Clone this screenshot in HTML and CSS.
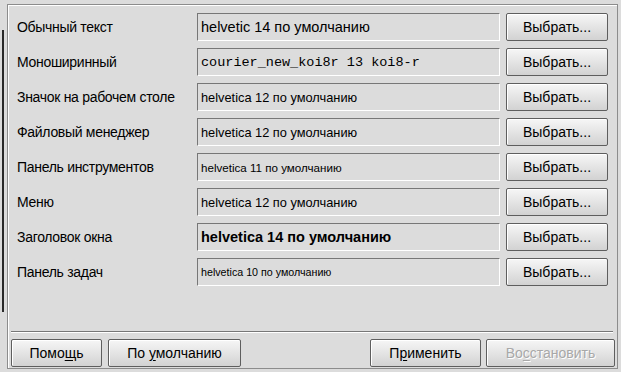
FILE: index.html
```html
<!DOCTYPE html>
<html lang="ru">
<head>
    <meta charset="UTF-8">
    <title>Шрифты</title>
    <link rel="stylesheet" href="styles.css">
</head>
<body>

    <div class="frame">
        <div class="fonts">
            <span class="label">Обычный текст</span>
            <div class="field f-normal">helvetic 14 по умолчанию</div>
            <button class="btn">Выбрать...</button>

            <span class="label">Моноширинный</span>
            <div class="field f-mono">courier_new_koi8r 13 koi8-r</div>
            <button class="btn">Выбрать...</button>

            <span class="label">Значок на рабочем столе</span>
            <div class="field f-12">helvetica 12 по умолчанию</div>
            <button class="btn">Выбрать...</button>

            <span class="label">Файловый менеджер</span>
            <div class="field f-12">helvetica 12 по умолчанию</div>
            <button class="btn">Выбрать...</button>

            <span class="label">Панель инструментов</span>
            <div class="field f-11">helvetica 11 по умолчанию</div>
            <button class="btn">Выбрать...</button>

            <span class="label">Меню</span>
            <div class="field f-12">helvetica 12 по умолчанию</div>
            <button class="btn">Выбрать...</button>

            <span class="label">Заголовок окна</span>
            <div class="field f-bold">helvetica 14 по умолчанию</div>
            <button class="btn">Выбрать...</button>

            <span class="label">Панель задач</span>
            <div class="field f-10">helvetica 10 по умолчанию</div>
            <button class="btn">Выбрать...</button>
        </div>

        <div class="separator"></div>

        <div class="actions">
            <button class="btn btn-help">Помо<u>щ</u>ь</button>
            <button class="btn btn-default">По <u>у</u>молчанию</button>
            <span class="spacer"></span>
            <button class="btn btn-apply">П<u>р</u>именить</button>
            <button class="btn btn-reset" disabled>Во<u>с</u>становить</button>
        </div>
    </div>

</body>
</html>
```

FILE: styles.css
```css
body {
    margin: 0;
    width: 621px;
    height: 372px;
    overflow: hidden;
    font-family: 'Liberation Sans', Arial, sans-serif;
    color: #000;
    /* dark edge of the window behind, on the far left */
    background: linear-gradient(#2a2a2a, #2a2a2a) no-repeat 2px 30px / 2px 282px, #dcdcdc;
}

.frame {
    box-sizing: border-box;
    width: 611px;
    height: 365px;
    margin: 4px 0 0 7px;
    border: 1px solid #8c8c8c;
    box-shadow: inset 1px 1px 0 #fff;
}

.fonts {
    display: grid;
    grid-template-columns: 174px 303px 102px;
    grid-auto-rows: 28px;
    column-gap: 6px;
    row-gap: 7px;
    padding: 8px 8px 0 9px;
}

.label {
    min-width: 0;
    font-size: 14px;
    letter-spacing: -0.3px;
    line-height: 28px;
    white-space: nowrap;
}

.field {
    box-sizing: border-box;
    display: flex;
    align-items: center;
    padding-left: 3px;
    border: 1px solid;
    border-color: #777 #fff #fff #777;
    white-space: nowrap;
    overflow: hidden;
}

.f-normal { font-size: 14.5px; }
.f-mono {
    font-family: 'Liberation Mono', 'Courier New', monospace;
    font-size: 13.5px;
}
.f-12 { font-size: 12.8px; }
.f-11 { font-size: 11.6px; }
.f-10 { font-size: 10.7px; }
.f-bold { font-size: 14.5px; font-weight: bold; }

.btn {
    box-sizing: border-box;
    height: 28px;
    padding: 0;
    border: 1px solid #5e5e5e;
    border-radius: 2px;
    background: linear-gradient(#f6f6f6, #e6e6e6 45%, #d2d2d2);
    box-shadow: inset 1px 1px 0 #fff;
    font-family: 'Liberation Sans', Arial, sans-serif;
    font-size: 14px;
    color: #000;
}

.btn u {
    text-underline-offset: 2px;
}

.separator {
    height: 1px;
    margin: 45px 4px 0 3px;
    background: #777;
    border-bottom: 1px solid #fff;
}

.actions {
    display: flex;
    gap: 6px;
    margin-top: 6px;
    padding: 0 2px 0 3px;
}

.spacer {
    flex: 1;
}

.btn-help { width: 91px; }
.btn-default { width: 133px; }
.btn-apply { width: 111px; margin-right: -1px; }
.btn-reset {
    width: 129px;
    color: #a8a8a8;
    text-shadow: 1px 1px 0 #fff;
}
```
